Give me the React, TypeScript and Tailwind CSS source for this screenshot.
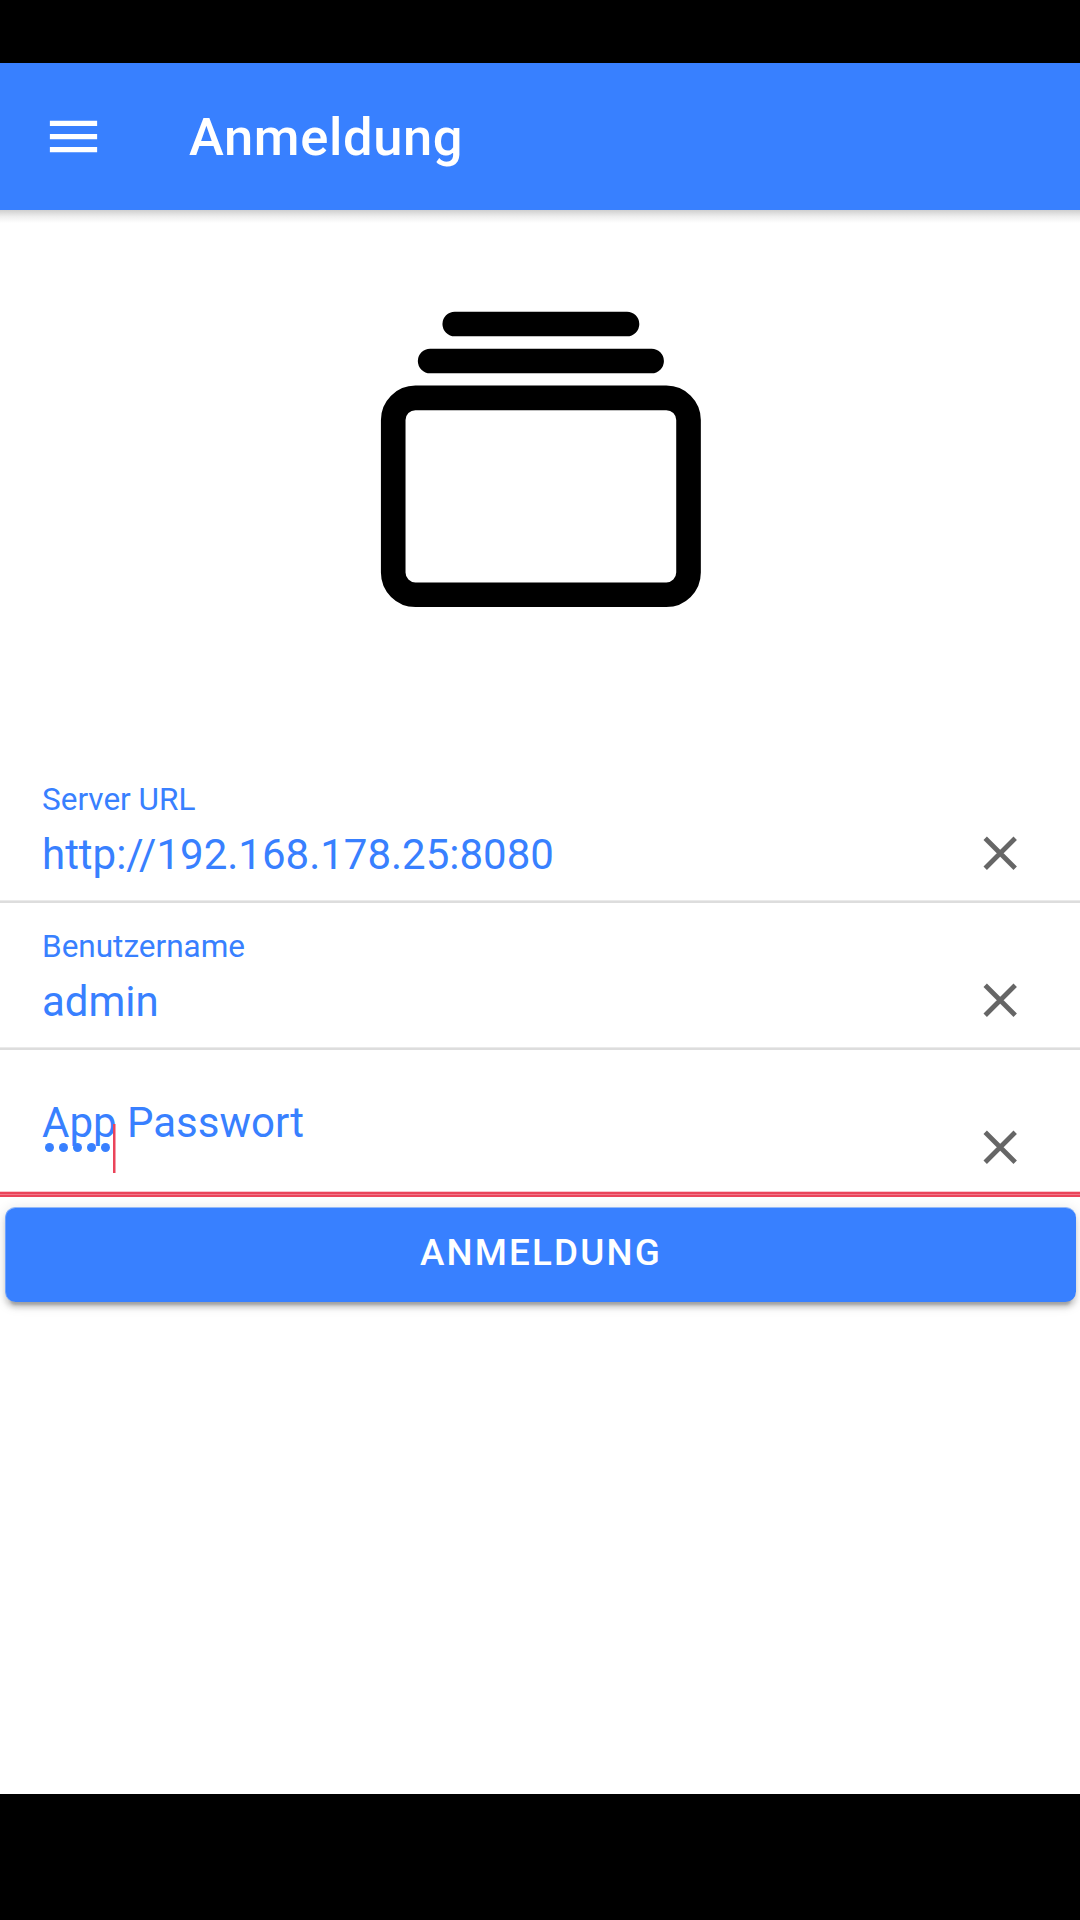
import React from 'react';

function ClearIcon() {
  return (
    <svg className="mt-[13px] mr-[61px] h-[38px] w-[38px] shrink-0" viewBox="0 0 38 38" fill="none" stroke="#666666" strokeWidth="4.8">
      <path d="M4.2 4.2L34.2 34.2M34.2 4.2L4.2 34.2" />
    </svg>
  );
}

function Field({ label, value }: { label: string; value: string }) {
  return (
    <div className="flex h-[147px] flex-col">
      <div className="flex flex-1 justify-between pt-[25px] pl-[42px]">
        <div className="flex flex-col gap-3 text-[#3880ff]">
          <label className="text-[31.5px] leading-[37px]">{label}</label>
          <div className="text-[42px] leading-[50px]">{value}</div>
        </div>
        <div className="pt-[40px]">
          <ClearIcon />
        </div>
      </div>
      <div className="h-[3px] border-t border-[#eaeaea] bg-[#dddddd]" />
    </div>
  );
}

function PasswordField() {
  return (
    <div className="flex h-[147px] flex-col">
      <div className="relative flex flex-1 justify-between pl-[42px]">
        <label className="absolute top-[48px] left-[42px] text-[42px] leading-[50px] text-[#3880ff]">App Passwort</label>
        <div className="mt-[74px] flex h-[49px] items-start self-start">
          <div className="flex gap-[5.2px] pt-[19px] pl-[2.5px]">
            {[0, 1, 2, 3, 4].map((i) => (
              <span key={i} className="h-[9px] w-[9px] rounded-full bg-[#3880ff]" />
            ))}
          </div>
          <span className="relative ml-[3px] h-[49px] w-[3px] border-r border-[#f4a1ac] bg-[#eb445a] bg-clip-padding" />
        </div>
        <div className="pt-[65px]">
          <ClearIcon />
        </div>
      </div>
      <div className="flex h-[6px] flex-col bg-[#eb445a]">
        <div className="h-px bg-[#f9c8cf]" />
        <div className="mt-[2px] h-px bg-[#f0798a]" />
      </div>
    </div>
  );
}

export default function App() {
  return (
    <div className="flex h-[1920px] w-[1080px] flex-col overflow-hidden bg-white font-['Roboto',sans-serif]">
      <div className="h-[63px] shrink-0 bg-black" />
      <header className="flex h-[147px] shrink-0 items-center bg-[#3880ff] text-white">
        <svg className="ml-[42px] h-[63px] w-[63px]" viewBox="0 0 24 24" fill="currentColor">
          <path d="M3 18h18v-2H3v2zm0-5h18v-2H3v2zm0-7v2h18V6H3z" />
        </svg>
        <h1 className="ml-[84px] text-[52.5px] leading-[62px] font-medium tracking-[0.012em]">Anmeldung</h1>
      </header>
      <main className="flex flex-1 flex-col">
        <div className="h-[13px] bg-linear-to-b from-[#cfcfcf] via-[#eeeeee] to-white" />
        <div className="flex h-[533px] justify-center pt-[40px]">
          <svg className="ml-[1.2px] h-[393.75px] w-[393.75px]" viewBox="0 0.6 512 512" fill="none" stroke="black" strokeWidth="32">
            <rect x="64" y="176" width="384" height="256" rx="28.87" ry="28.87" strokeLinejoin="round" />
            <path d="M144 80h224M112 128h288" strokeLinecap="round" />
          </svg>
        </div>
        <Field label="Server URL" value="http://192.168.178.25:8080" />
        <Field label="Benutzername" value="admin" />
        <PasswordField />
        <button className="mt-[10px] mr-[4px] ml-[5px] h-[95px] rounded-[10.5px] border-t border-l border-t-[#94b9f8] border-l-[#6fa3ff] bg-[#3880ff] pb-[5px] text-[36.75px] leading-[44px] font-medium tracking-[0.06em] text-white shadow-[0_7.9px_2.6px_-5.25px_rgba(0,0,0,0.2),0_5.25px_5.25px_0_rgba(0,0,0,0.14),0_2.6px_13px_0_rgba(0,0,0,0.12)]">
          ANMELDUNG
        </button>
      </main>
      <div className="h-[126px] shrink-0 bg-black" />
    </div>
  );
}
